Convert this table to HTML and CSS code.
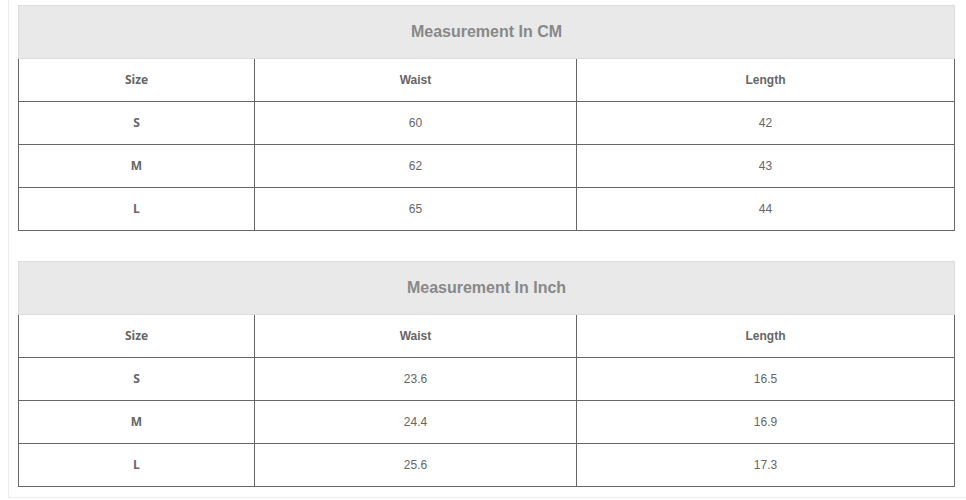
FILE: index.html
```html
<!DOCTYPE html>
<html>
<head>
<meta charset="utf-8">
<link rel="stylesheet" href="styles.css">
</head>
<body>
<div class="wrap">
  <table class="size-table">
    <colgroup><col class="c1"><col class="c2"><col class="c3"></colgroup>
    <tr><th class="title" colspan="3">Measurement In CM</th></tr>
    <tr><td class="lbl">Size</td><td class="hd">Waist</td><td class="hd">Length</td></tr>
    <tr><td class="lbl">S</td><td>60</td><td>42</td></tr>
    <tr><td class="lbl">M</td><td>62</td><td>43</td></tr>
    <tr><td class="lbl">L</td><td>65</td><td>44</td></tr>
  </table>
  <table class="size-table">
    <colgroup><col class="c1"><col class="c2"><col class="c3"></colgroup>
    <tr><th class="title" colspan="3">Measurement In Inch</th></tr>
    <tr><td class="lbl">Size</td><td class="hd">Waist</td><td class="hd">Length</td></tr>
    <tr><td class="lbl">S</td><td>23.6</td><td>16.5</td></tr>
    <tr><td class="lbl">M</td><td>24.4</td><td>16.9</td></tr>
    <tr><td class="lbl">L</td><td>25.6</td><td>17.3</td></tr>
  </table>
</div>
</body>
</html>
```
FILE: styles.css
```css
html, body {
  margin: 0;
  padding: 0;
  background: #fff;
  overflow: hidden;
}
.wrap {
  margin-left: 8px;
  width: 980px;
  border-left: 1px solid #ececec;
  border-bottom: 1px solid #ececec;
  padding: 5px 0 10px 9px;
  display: flex;
  flex-direction: column;
  gap: 30px;
}
.size-table {
  border-collapse: collapse;
  width: 936px;
  table-layout: fixed;
  font-family: "Liberation Sans", Arial, sans-serif;
  font-size: 12px;
  color: #666;
}
.c1 { width: 236px; }
.c2 { width: 322px; }
.c3 { width: 378px; }
.size-table td {
  border: 1px solid #666;
  height: 42px;
  padding: 0;
  text-align: center;
  vertical-align: middle;
}
.size-table .title {
  background: #e9e9e9;
  border: 1px solid #dcdcdc;
  height: 52px;
  padding: 0;
  font-size: 16px;
  font-weight: bold;
  color: #888;
  text-align: center;
  vertical-align: middle;
}
.size-table td.lbl {
  font-family: "Open Sans", sans-serif;
  font-weight: 700;
  font-size: 12px;
  line-height: 14px;
  height: 41px;
  padding: 0 0 1px 0;
  color: #666;
}
.size-table .hd {
  font-weight: bold;
}
```
